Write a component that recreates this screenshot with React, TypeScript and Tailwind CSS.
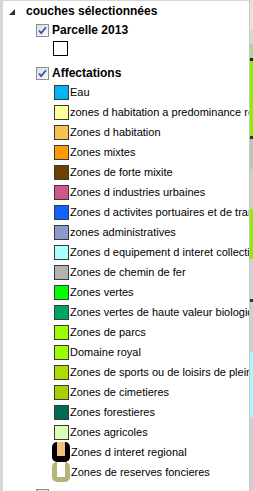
import React from 'react'

type Layer = {
  label: string
  color?: string
  kind?: 'swatch' | 'regional' | 'reserve'
}

const layers: Layer[] = [
  { label: 'Eau', color: '#00b4f5' },
  { label: 'zones d habitation a predominance residentielle', color: '#ffff99' },
  { label: 'Zones d habitation', color: '#f7c152' },
  { label: 'Zones mixtes', color: '#ff9900' },
  { label: 'Zones de forte mixite', color: '#6e4100' },
  { label: 'Zones d industries urbaines', color: '#d0578a' },
  { label: 'Zones d activites portuaires et de transport', color: '#0f62fe' },
  { label: 'zones administratives', color: '#8b99cc' },
  { label: 'Zones d equipement d interet collectif', color: '#aaffff' },
  { label: 'Zones de chemin de fer', color: '#b2b2b2' },
  { label: 'Zones vertes', color: '#00ff00' },
  { label: 'Zones vertes de haute valeur biologique', color: '#00a565' },
  { label: 'Zones de parcs', color: '#99ff00' },
  { label: 'Domaine royal', color: '#99ff00' },
  { label: 'Zones de sports ou de loisirs de plein air', color: '#aadd00' },
  { label: 'Zones de cimetieres', color: '#a8d000' },
  { label: 'Zones forestieres', color: '#006b55' },
  { label: 'Zones agricoles', color: '#d9ffb3' },
  { label: 'Zones d interet regional', kind: 'regional' },
  { label: 'Zones de reserves foncieres', kind: 'reserve' },
]

// strip of the map peeking out on the right
const mapStrip = [
  { h: 30, c: '#e9e3cf' },
  { h: 14, c: '#d8d8cc' },
  { h: 14, c: '#a8d6a6' },
  { h: 3, c: '#222' },
  { h: 75, c: '#8cf000' },
  { h: 3, c: '#333' },
  { h: 30, c: '#b8c8b0' },
  { h: 40, c: '#cfcfc6' },
  { h: 50, c: '#8cf000' },
  { h: 40, c: '#d2d2d2' },
  { h: 3, c: '#333' },
  { h: 50, c: '#cfcfcf' },
  { h: 65, c: '#a5fbfb' },
  { h: 74, c: '#d0d0d0' },
]

const CheckBox = () => (
  <svg width="13" height="13" viewBox="0 0 13 13" className="shrink-0">
    <defs>
      <linearGradient id="cb" x1="0" y1="0" x2="1" y2="1">
        <stop offset="0" stopColor="#dcdcdc" />
        <stop offset="1" stopColor="#fbfbfb" />
      </linearGradient>
    </defs>
    <rect x="0.5" y="0.5" width="12" height="12" fill="url(#cb)" stroke="#8e8f8f" />
    <path d="M3 6.5 L5.2 9 L10 3.2" fill="none" stroke="#2a55c4" strokeWidth="1.8" />
  </svg>
)

const Swatch = ({ layer }: { layer: Layer }) => {
  if (layer.kind === 'regional') {
    return (
      <svg width="18" height="20" viewBox="0 0 18 20" className="shrink-0 -ml-[2px]">
        <rect x="0" y="0" width="18" height="20" rx="5" fill="#000" />
        <rect x="5" y="0" width="8" height="14" fill="#f1c27d" />
      </svg>
    )
  }
  if (layer.kind === 'reserve') {
    return (
      <svg width="18" height="20" viewBox="0 0 18 20" className="shrink-0 -ml-[2px]">
        <rect x="0" y="0" width="18" height="20" rx="5" fill="#b3b479" />
        <rect x="5" y="0" width="8" height="15" fill="#fff" />
      </svg>
    )
  }
  return (
    <div
      className="w-[15px] h-[15px] shrink-0 border border-[#3a3a3a]"
      style={{ backgroundColor: layer.color }}
    />
  )
}

export default function App() {
  return (
    <div
      className="w-[253px] h-[491px] flex bg-[#d6d6d6] overflow-hidden"
      style={{ fontFamily: '"Liberation Sans", Arial, sans-serif' }}
    >
      <div className="flex-1 ml-[3px] mt-[1px] bg-white overflow-hidden text-black">
        {/* root node */}
        <div className="h-[20px] flex items-center">
          <svg width="6" height="6" viewBox="0 0 6 6" className="ml-[6px] mr-[11px] mt-[1px]">
            <polygon points="6,0 6,6 0,6" fill="#333" />
          </svg>
          <span className="text-[12px] font-bold whitespace-nowrap">couches sélectionnées</span>
        </div>

        {/* Parcelle 2013 */}
        <div className="h-[18px] flex items-center pl-[33px] gap-[3px]">
          <CheckBox />
          <span className="text-[12px] font-bold whitespace-nowrap">Parcelle 2013</span>
        </div>
        <div className="h-[18px] flex items-center pl-[50px]">
          <div className="w-[15px] h-[15px] border-[1.5px] border-black bg-white" />
        </div>

        {/* Affectations */}
        <div className="h-[18px] mt-[7px] flex items-center pl-[33px] gap-[3px]">
          <CheckBox />
          <span className="text-[12px] font-bold whitespace-nowrap">Affectations</span>
        </div>

        <div className="flex flex-col">
          {layers.map((l) => (
            <div key={l.label} className="h-[20px] flex items-center pl-[51px] gap-[1px]">
              <Swatch layer={l} />
              <span className="text-[11px] whitespace-nowrap">{l.label}</span>
            </div>
          ))}
        </div>

        {/* next group, cut off */}
        <div className="mt-[7px] pl-[33px]">
          <CheckBox />
        </div>
      </div>

      <div className="w-[1px] bg-[#c8c8c8]" />
      <div className="w-[3px] flex flex-col">
        {mapStrip.map((s, i) => (
          <div key={i} style={{ height: s.h, backgroundColor: s.c }} />
        ))}
      </div>
    </div>
  )
}
